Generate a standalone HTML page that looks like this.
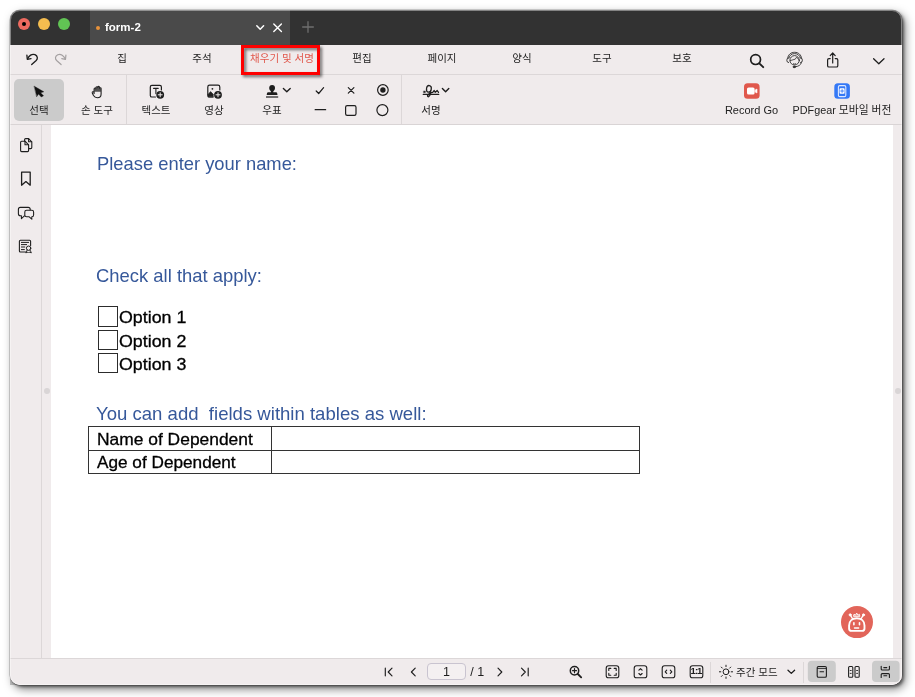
<!DOCTYPE html>
<html lang="ko">
<head>
<meta charset="utf-8">
<title>form-2</title>
<style>
*{box-sizing:border-box;margin:0;padding:0}
html,body{width:915px;height:697px;overflow:hidden;background:#fff}
body{font-family:"Liberation Sans","Noto Sans CJK KR",sans-serif;color:#1c1c1c;position:relative}
.abs{position:absolute}
#win{will-change:transform;position:absolute;left:10px;top:10px;width:892.2px;height:675.3px;border-radius:10px;background:#f0ebec;
 box-shadow:0 0 0 .5px rgba(0,0,0,.3),2px 2px 3px rgba(0,0,0,.45),3px 4px 10px rgba(0,0,0,.5);overflow:hidden}
#title{position:absolute;left:0;top:0;width:893px;height:35px;background:#323232}
#tab{position:absolute;left:79.7px;top:0;width:200.3px;height:35px;background:#4a4a4a}
#win::after{content:"";position:absolute;left:0;top:0;right:0;bottom:0;border-radius:10px;border:1px solid rgba(255,255,255,.4);pointer-events:none}
.dot{position:absolute;top:8px;width:12px;height:12px;border-radius:50%}
#menu{position:absolute;left:0;top:35px;width:893px;height:30px;border-bottom:1px solid #dcd7d8}
.mi{position:absolute;top:0;height:29px;line-height:27.5px;width:80px;text-align:center;font-size:10.5px;color:#222}
#tools{position:absolute;left:0;top:65px;width:893px;height:50px;border-bottom:1px solid #d9d4d5}
.tl{position:absolute;top:27px;height:16px;line-height:16px;font-size:10.5px;text-align:center;color:#222;white-space:nowrap}
.vsep{position:absolute;width:1px;background:#dcd7d8}
#side{position:absolute;left:0;top:115px;width:32px;height:533px;border-right:1px solid #dcd7d8}
#page{position:absolute;left:41px;top:115px;width:842.4px;height:533px;background:#fff}
#status{position:absolute;left:0;top:648px;width:893px;height:28px;background:#f0ebec}
.doc{position:absolute;white-space:nowrap;transform-origin:0 0;display:inline-block}
.h{color:#36589a;font-size:19px;line-height:22px}
.b{color:#000;font-size:16.5px;line-height:20px;-webkit-text-stroke:.3px #000}
svg{position:absolute;overflow:visible}
</style>
</head>
<body>
<div class="abs" style="left:10.4px;top:676px;width:10px;height:9.4px;background:#c8c8c8"></div>
<div id="win">
  <div id="title">
    <div id="tab"></div>
    <div class="dot" style="left:8px;background:#ee6a5f"></div>
    <div class="abs" style="left:12px;top:12px;width:4px;height:4px;border-radius:50%;background:#000"></div>
    <div class="dot" style="left:28px;background:#f5bd4f"></div>
    <div class="dot" style="left:48px;background:#61c454"></div>
    <div class="abs" style="left:86px;top:16px;width:4px;height:4px;border-radius:50%;background:#e8923a"></div>
    
    <svg style="left:0;top:0" width="893" height="35" viewBox="10 10 893 35" fill="none" stroke-linecap="round" stroke-linejoin="round">
      <path d="M256.8 25.8 L260.2 29.2 L263.6 25.8" stroke="#fff" stroke-width="1.5"/>
      <path d="M273.8 24 L281.4 31.4 M281.4 24 L273.8 31.4" stroke="#fff" stroke-width="1.4"/>
      <path d="M308 21.2 V32.8 M302.2 27 H313.8" stroke="#6f6f6f" stroke-width="1.3" stroke-linecap="butt"/>
    </svg>
    <div class="abs" style="left:95px;top:9px;font-size:11.5px;font-weight:bold;color:#fff;line-height:16px">form-2</div>
  </div>
  <div id="menu">
    
    <svg style="left:0;top:0" width="893" height="30" viewBox="10 45 893 30" fill="none" stroke-linecap="round" stroke-linejoin="round">
      <!-- undo -->
      <path d="M26.9 55.2 L27.3 59.3 L31 58.7" stroke="#1e1e1e" stroke-width="1.35"/>
      <path d="M27.6 59 C28.8 55.8 32 53.4 35 54.7 C37.6 55.9 38.1 58.6 36.2 60.5 L31.7 64.5" stroke="#1e1e1e" stroke-width="1.35"/>
      <!-- redo -->
      <path d="M65.9 55.2 L65.5 59.3 L61.8 58.7" stroke="#a4a0a1" stroke-width="1.2"/>
      <path d="M65.2 59 C64 55.8 60.8 53.4 57.8 54.7 C55.2 55.9 54.7 58.6 56.6 60.5 L61.1 64.5" stroke="#a4a0a1" stroke-width="1.2"/>
      <!-- search -->
      <circle cx="755.6" cy="59.6" r="4.9" stroke="#1e1e1e" stroke-width="1.7"/>
      <path d="M759.3 63.3 L763.2 67.2" stroke="#1e1e1e" stroke-width="1.9"/>
      <!-- headset -->
      <g stroke="#2e2e2e" stroke-width="0.9">
        <circle cx="794.6" cy="60.3" r="4.7"/>
        <path d="M787.7 58.2 C788 54.6 791 52.3 794.6 52.3 C798.2 52.3 801.2 54.6 801.5 58.2"/>
        <path d="M788.9 58 C789.4 55.2 791.8 53.6 794.6 53.6 C797.4 53.6 799.8 55.2 800.3 58"/>
        <path d="M788.6 57.8 Q786.8 57.8 786.8 60.2 Q786.8 62.6 788.6 62.6"/>
        <path d="M800.6 57.8 Q802.4 57.8 802.4 60.2 Q802.4 62.6 800.6 62.6"/>
        <path d="M801.4 62.6 C801 65 798.4 66.4 795.4 66.8"/>
        <ellipse cx="794.2" cy="66.9" rx="1.2" ry=".8" fill="#2e2e2e"/>
        <path d="M790.2 60.6 L795.2 59.2 L796.6 57.2 L798.8 59.6" stroke-width=".8"/>
        <path d="M793.4 63.8 Q794.6 64.6 795.8 63.8" stroke-width=".8"/>
      </g>
      <!-- share -->
      <path d="M830.2 58.6 H828.9 Q827.6 58.6 827.6 59.9 V65.7 Q827.6 67 828.9 67 H836.5 Q837.8 67 837.8 65.7 V59.9 Q837.8 58.6 836.5 58.6 H835.2" stroke="#1e1e1e" stroke-width="1.2"/>
      <path d="M832.7 63 V53.2 M830.2 55.6 L832.7 53 L835.2 55.6" stroke="#1e1e1e" stroke-width="1.2"/>
      <!-- chevron -->
      <path d="M873.6 58.8 L878.8 63.8 L884 58.8" stroke="#1e1e1e" stroke-width="1.3"/>
    </svg>
    <div class="abs" style="left:231px;top:-0.4px;width:79.2px;height:30.1px;border:3.2px solid #fe0000;filter:drop-shadow(2px 2px 1.5px rgba(0,0,0,.55))"></div>
    <div class="mi" style="left:72px">집</div>
    <div class="mi" style="left:152px">주석</div>
    <div class="mi" style="left:232px;color:#e0584c">채우기 및 서명</div>
    <div class="mi" style="left:312px">편집</div>
    <div class="mi" style="left:392px">페이지</div>
    <div class="mi" style="left:472px">양식</div>
    <div class="mi" style="left:552px">도구</div>
    <div class="mi" style="left:632px">보호</div>
  </div>
  <div id="tools">
    <div class="abs" style="left:4px;top:4px;width:50px;height:42px;border-radius:5px;background:#cbcbcb"></div>
    
    <svg style="left:0;top:0" width="893" height="50" viewBox="10 75 893 50" fill="none" stroke="#1e1e1e" stroke-linecap="round" stroke-linejoin="round">
      <!-- pointer -->
      <path d="M34.3 86.2 L43.8 91.8 L40.6 92.8 L43.5 95.8 L41.3 97 L38.5 94 L36.8 96.6 Z" fill="#111" stroke="#111" stroke-width=".4"/>
      <!-- hand -->
      <g stroke-width="1.1" transform="translate(-.3 .4)">
        <path d="M94.4 93 V88.6 Q94.4 87.6 95.3 87.6 Q96.2 87.6 96.2 88.6 V87.4 Q96.2 86.3 97.1 86.3 Q98 86.3 98 87.4 V87 Q98 86 98.9 86 Q99.8 86 99.8 87 V88.2 Q99.8 87.3 100.6 87.3 Q101.4 87.3 101.4 88.2 V93.6 C101.4 96.2 99.8 97.4 97.6 97.4 C95.8 97.4 94.6 96.6 93.8 95.2 L92.6 92.6 Q92.3 91.7 93 91.4 Q93.8 91.1 94.4 92.2"/>
        <path d="M94.5 91.4 H101.3 V88.2 Q100.6 87.2 99.8 88 V87 Q98.9 85.9 98 87 Q97.1 86.1 96.2 87.4 V88.4 Q95.3 87.4 94.5 88.6 Z" fill="#3a3a3a" stroke="none" opacity=".85"/>
      </g>
      <!-- text box -->
      <g stroke-width="1.2">
        <path d="M161.4 90 V87 Q161.4 85.4 159.8 85.4 H151.9 Q150.3 85.4 150.3 87 V95.4 Q150.3 97 151.9 97 H155.4"/>
        <path d="M153.6 88.4 H158.2 M155.9 88.4 V93.6" stroke-width="1.1"/>
        <circle cx="160.2" cy="94.8" r="3.9" fill="#1e1e1e" stroke="none"/>
        <path d="M160.2 92.8 V96.8 M158.2 94.8 H162.2" stroke="#f0ebec" stroke-width="1"/>
      </g>
      <!-- image -->
      <g stroke-width="1.2">
        <path d="M219.8 90 V87 Q219.8 85.2 218 85.2 H209.6 Q207.8 85.2 207.8 87 V95.2 Q207.8 97 209.6 97 H213"/>
        <circle cx="212.4" cy="88.8" r="0.9" fill="#1e1e1e" stroke="none"/>
        <path d="M208 96.8 V94.4 L210.6 91.6 L213.2 94.2 L213.2 96.8 Z" fill="#1e1e1e" stroke-width=".6"/>
        <circle cx="218" cy="94.8" r="3.9" fill="#1e1e1e" stroke="none"/>
        <path d="M218 92.8 V96.8 M216 94.8 H220" stroke="#f0ebec" stroke-width="1"/>
      </g>
      <!-- stamp -->
      <g fill="#1e1e1e" stroke="none">
        <ellipse cx="272.1" cy="88" rx="2.9" ry="3.1"/>
        <path d="M270.7 89.5 H273.5 L273.3 92.3 H276 Q277 92.3 277.2 93.3 L277.5 95 H266.7 L267 93.3 Q267.2 92.3 268.2 92.3 H270.9 Z"/>
        <rect x="266" y="96.4" width="12.2" height="1.2"/>
      </g>
      <path d="M283.4 88.6 L286.8 91.8 L290.2 88.6" stroke-width="1.4"/>
      <!-- check -->
      <path d="M316.2 91 L318.7 93.5 L323.6 87.7" stroke-width="1.2"/>
      <!-- x -->
      <path d="M348.3 87.6 L353.9 93.2 M353.9 87.6 L348.3 93.2" stroke-width="1.2"/>
      <!-- radio -->
      <circle cx="382.9" cy="90" r="5.3" stroke-width="1.2"/>
      <circle cx="382.9" cy="90" r="2.7" fill="#1e1e1e" stroke="none"/>
      <!-- dash -->
      <path d="M315.2 109.7 H325.6" stroke-width="1.3"/>
      <!-- square -->
      <rect x="345.6" y="105.6" width="10.4" height="9.8" rx="1.6" stroke-width="1.2"/>
      <!-- circle -->
      <circle cx="382.4" cy="110.1" r="5.5" stroke-width="1.2"/>
      <!-- signature -->
      <g stroke-width="1.25">
        <path d="M423.2 94.4 H438.8" stroke-width="1.1"/>
        <rect x="423.8" y="91.1" width="1.5" height="1.5" fill="#1e1e1e" stroke-width=".5"/>
        <ellipse cx="428.9" cy="88.8" rx="2.4" ry="3.3" transform="rotate(8 428.9 88.8)"/>
        <path d="M430.7 91 C430.2 93 429.2 94 428 95 C427.2 95.8 427.4 96.8 428.4 96.8 C429.8 96.6 430.4 94.2 430.9 92.7 L432.7 92.4 L434.2 90.5 L435.3 92.3 L437.2 90.5 L438.5 92.4"/>
      </g>
      <path d="M442.4 88.6 L445.6 91.8 L448.8 88.6" stroke-width="1.4"/>
      <!-- record go -->
      <rect x="744" y="83.3" width="15.6" height="15.5" rx="3.6" fill="#e0584c" stroke="none"/>
      <rect x="747" y="87.4" width="7.6" height="7.2" rx="1.6" fill="#fff" stroke="none"/>
      <path d="M755.2 90 L757 89 V93 L755.2 92 Z" fill="#fff" stroke="#fff" stroke-width=".6"/>
      <!-- pdfgear mobile -->
      <rect x="834.3" y="83.3" width="15.6" height="15.5" rx="3.6" fill="#3478f6" stroke="none"/>
      <rect x="838.4" y="85.6" width="7.4" height="11" rx="1.4" fill="none" stroke="#dfe9ff" stroke-width="1.1"/>
      <rect x="839.6" y="88.2" width="5" height="5.6" rx=".8" fill="#fff" stroke="none"/>
      <path d="M842.1 89.6 V92.4 M840.7 91 H843.5" stroke="#3478f6" stroke-width=".9"/>
    </svg>
    <div class="tl" style="left:4px;width:50px">선택</div>
    <div class="tl" style="left:57px;width:60px">손 도구</div>
    <div class="tl" style="left:116px;width:60px">텍스트</div>
    <div class="tl" style="left:174px;width:60px">영상</div>
    <div class="tl" style="left:232px;width:60px">우표</div>
    <div class="tl" style="left:391px;width:60px">서명</div>
    <div class="tl" style="left:701.5px;width:80px;font-size:11px">Record Go</div>
    <div class="tl" style="left:772px;width:120px;font-size:10.8px">PDFgear 모바일 버전</div>
    <div class="vsep" style="left:116px;top:0;height:49px"></div>
    <div class="vsep" style="left:391px;top:0;height:49px"></div>
  </div>
  <div id="side">
    <svg style="left:0;top:0" width="42" height="533" viewBox="10 125 42 533" fill="none" stroke="#1e1e1e" stroke-width="1.1" stroke-linecap="round" stroke-linejoin="round">
      <!-- pages -->
      <path d="M24.6 141 V139.6 Q24.6 138.6 25.6 138.6 H28.6 L31.8 141.8 V147.6 Q31.8 148.6 30.8 148.6 H29"/>
      <path d="M28.6 138.8 V141.8 H31.6"/>
      <path d="M21.6 141.2 H25 L28.6 144.8 V150.6 Q28.6 151.6 27.6 151.6 H21.6 Q20.6 151.6 20.6 150.6 V142.2 Q20.6 141.2 21.6 141.2 Z"/>
      <path d="M25 141.4 V144.8 H28.4"/>
      <!-- bookmark -->
      <path d="M21.6 172.2 H30.2 V185.2 L25.9 181.6 L21.6 185.2 Z" stroke-width="1.3"/>
      <!-- comments -->
      <path d="M20.4 207.4 H28.2 Q30.2 207.4 30.2 209.4 V213.8 Q30.2 215.8 28.2 215.8 H24.4 L21.4 218.6 V215.8 H20.4 Q18.4 215.8 18.4 213.8 V209.4 Q18.4 207.4 20.4 207.4 Z"/>
      <path d="M26.6 210.2 H31.8 Q33.6 210.2 33.6 212 V215 Q33.6 216.8 31.8 216.8 V219.2 L29.2 216.8 H26.6 Q24.8 216.8 24.8 215 V212 Q24.8 210.2 26.6 210.2 Z" fill="#f0ebec"/>
      <!-- certificate doc -->
      <path d="M25.6 252 H20.4 Q19.4 252 19.4 251 V241.2 Q19.4 240.2 20.4 240.2 H29.6 Q30.6 240.2 30.6 241.2 V245.6"/>
      <path d="M21.4 242.4 H28.6 M21.4 244.6 H26.6 M21.4 247 H24.8 M21.4 249.6 H24.4" stroke-width="1"/>
      <circle cx="28.6" cy="248.2" r="2.2" stroke-width="1"/>
      <path d="M27.2 250 L25.8 252.8 L27.8 252.2 L28.6 253 L29.4 252.2 L31.4 252.8 L30 250" stroke-width=".9"/>
    </svg>
    <div class="abs" style="left:33.9px;top:263.4px;width:5.8px;height:5.8px;border-radius:50%;background:#d9d5d6"></div>
  </div>
  <div id="page">
    
    <div class="abs" style="left:47.1px;top:181.3px;width:20.2px;height:20.3px;border:1.3px solid #2c2c2c"></div>
    <div class="abs" style="left:47.1px;top:204.5px;width:20.2px;height:20.3px;border:1.3px solid #2c2c2c"></div>
    <div class="abs" style="left:47.1px;top:227.7px;width:20.2px;height:20.3px;border:1.3px solid #2c2c2c"></div>
    <div class="abs" style="left:36.8px;top:300.8px;width:552.2px;height:48.6px;border:1.2px solid #333"></div>
    <div class="abs" style="left:36.8px;top:324.8px;width:552.2px;height:1.1px;background:#333"></div>
    <div class="abs" style="left:219.5px;top:300.8px;width:1.1px;height:48.6px;background:#333"></div>
    <svg style="left:789.9px;top:480.7px" width="32.2" height="32.2" viewBox="840.9 605.7 32.2 32.2" fill="none" stroke="#fff" stroke-width="1.5" stroke-linecap="round" stroke-linejoin="round">
      <circle cx="856.9" cy="621.8" r="16" fill="#e2655a" stroke="none"/>
      <path d="M851.4 630.6 Q849 630.6 849 628.2 V625.2 C849 620.6 852.4 617.9 856.7 617.9 C861 617.9 864.4 620.6 864.4 625.2 V628.2 Q864.4 630.6 862 630.6 Z" stroke-width="1.9"/>
      <circle cx="850.1" cy="614.6" r="1.1" fill="#fff" stroke-width=".8"/>
      <circle cx="863.4" cy="614.6" r="1.1" fill="#fff" stroke-width=".8"/>
      <path d="M850.6 615.4 L852.4 618.4 M862.9 615.4 L861.1 618.4" stroke-width="1.3"/>
      <path d="M853.5 615.7 L853.9 614 L855.3 614.9 L856.6 612.8 L857.9 614.9 L859.3 614 L859.7 615.7 Z" stroke-width=".9" fill="#fff" fill-opacity=".35"/>
      <path d="M853.8 622.4 V624.4 M859.4 622.4 V624.4" stroke-width="1.6"/>
      <path d="M854.4 627.7 H858.6" stroke-width="1.4"/>
    </svg>
    <div class="abs" style="left:844.2px;top:263.4px;width:5.8px;height:5.8px;border-radius:50%;background:#d9d5d6"></div>
    <span class="doc h" style="left:45.6px;top:27.6px;transform:scaleX(.966)">Please enter your name:</span>
    <span class="doc h" style="left:45px;top:140.1px;transform:scaleX(.970)">Check all that apply:</span>
    <span class="doc b" style="left:68.1px;top:182.4px;transform:scaleX(1.079)">Option 1</span>
    <span class="doc b" style="left:68.1px;top:205.5px;transform:scaleX(1.079)">Option 2</span>
    <span class="doc b" style="left:68.1px;top:228.7px;transform:scaleX(1.079)">Option 3</span>
    <span class="doc h" style="left:45.1px;top:278.1px;transform:scaleX(.977)">You can add&nbsp; fields within tables as well:</span>
    <span class="doc b" style="left:45.5px;top:303.8px;transform:scaleX(1.055)">Name of Dependent</span>
    <span class="doc b" style="left:46.3px;top:326.9px;transform:scaleX(1.042)">Age of Dependent</span>
  </div>
  <div id="status"><div class="abs" style="left:0;top:0;width:893px;height:1px;background:#dcd7d8"></div>
    <svg style="left:0;top:0" width="893" height="28" viewBox="10 658 893 28" fill="none" stroke="#1e1e1e" stroke-width="1.3" stroke-linecap="round" stroke-linejoin="round">
      <!-- first -->
      <g stroke-width="1.15" transform="translate(0 .4)">
      <path d="M385.3 667.8 V675.4 M392 667.8 L388.2 671.6 L392 675.4"/>
      <!-- prev -->
      <path d="M415.2 667.8 L411.4 671.6 L415.2 675.4"/>
      <!-- next -->
      <path d="M498 667.8 L501.8 671.6 L498 675.4"/>
      <!-- last -->
      <path d="M528.2 667.8 V675.4 M521.5 667.8 L525.3 671.6 L521.5 675.4"/>
      </g>
      <!-- zoom in -->
      <circle cx="574.5" cy="670.7" r="4.2" stroke-width="1.5"/>
      <path d="M577.8 674 L581.2 677.4" stroke-width="1.8"/>
      <path d="M574.5 668.7 V672.7 M572.5 670.7 H576.5" stroke-width="1.2"/>
      <!-- fullscreen -->
      <g stroke-width="1.1" transform="translate(0 .7)">
      <rect x="606.2" y="665.1" width="12.6" height="12" rx="2.4"/>
      <path d="M608.8 669.7 V667.7 H610.8 M614.2 667.7 H616.2 V669.7 M616.2 672.5 V674.5 H614.2 M610.8 674.5 H608.8 V672.5" stroke-width="1.1"/>
      <rect x="634.2" y="665.1" width="12.6" height="12" rx="2.4"/>
      <path d="M638.9 669.4 L640.5 667.9 L642.1 669.4 M638.9 672.8 L640.5 674.3 L642.1 672.8" stroke-width="1.15"/>
      <rect x="662.2" y="665.1" width="12.6" height="12" rx="2.4"/>
      <path d="M666.7 669.5 L665.2 671.1 L666.7 672.7 M670.3 669.5 L671.8 671.1 L670.3 672.7" stroke-width="1.15"/>
      <rect x="690.2" y="665.1" width="12.6" height="12" rx="2.4"/>
      </g>
      <!-- sun -->
      <g stroke-width="1">
      <circle cx="726" cy="671.8" r="2.9"/>
      <path d="M726 665.2 V666.6 M726 677 V678.4 M719.4 671.8 H720.8 M731.2 671.8 H732.6 M721.3 667.1 L722.3 668.1 M729.7 675.5 L730.7 676.5 M721.3 676.5 L722.3 675.5 M729.7 668.1 L730.7 667.1"/>
      </g>
      <path d="M788 670.2 L791.3 673.4 L794.6 670.2" stroke-width="1.3"/>
      <!-- view buttons -->
      <rect x="807.8" y="660.8" width="28" height="21.2" rx="4" fill="#cbcbcb" stroke="none"/>
      <rect x="872" y="660.8" width="27.6" height="21.2" rx="4" fill="#cbcbcb" stroke="none"/>
      <g stroke-width="1.1">
      <rect x="817.2" y="666.5" width="9.2" height="10.8" rx="1.3"/>
      <path d="M817.4 668.4 H826.2" stroke-width=".9"/>
      <path d="M820 671.8 H823.6" stroke-width="1.1"/>
      <rect x="848.6" y="666.5" width="4.2" height="10.8" rx="1.1"/>
      <rect x="855" y="666.5" width="4.2" height="10.8" rx="1.1"/>
      <path d="M850.2 670.5 H851.2 M850.2 673.4 H851.2 M856.6 670.5 H857.6 M856.6 673.4 H857.6" stroke-width=".9"/>
      <path d="M881.2 666.2 V669 Q881.2 670 882.2 670 H888.4 Q889.4 670 889.4 669 V666.2 M883.8 667.6 H886.8 M881.2 677.4 V674.6 Q881.2 673.6 882.2 673.6 H888.4 Q889.4 673.6 889.4 674.6 V677.4 M883.8 675.8 H886.8"/>
      </g>
    </svg>
    <div class="abs" style="left:416.6px;top:5.4px;width:39.6px;height:16.2px;border:1px solid #c9c4d0;border-radius:4px;background:#f4f0f1"></div>
    <div class="abs" style="left:416.6px;top:6px;width:39.6px;height:16px;line-height:16px;text-align:center;font-size:12.5px;color:#1e1e1e">1</div>
    <div class="abs" style="left:460.2px;top:6px;height:16px;line-height:16px;font-size:12.5px;color:#1e1e1e;white-space:nowrap">/ 1</div>
    <div class="abs" style="left:679.7px;top:5.3px;width:12.6px;height:16px;line-height:16px;text-align:center;font-size:9.5px;font-weight:bold;letter-spacing:-1px;color:#1e1e1e;white-space:nowrap">1:1</div>
    <div class="abs" style="left:726px;top:6px;height:16px;line-height:16px;font-size:10.5px;color:#1e1e1e;white-space:nowrap">주간 모드</div>
    <div class="vsep" style="left:700px;top:4px;height:21px"></div>
    <div class="vsep" style="left:793px;top:4px;height:21px"></div>
  </div>
</div>
</body>
</html>
